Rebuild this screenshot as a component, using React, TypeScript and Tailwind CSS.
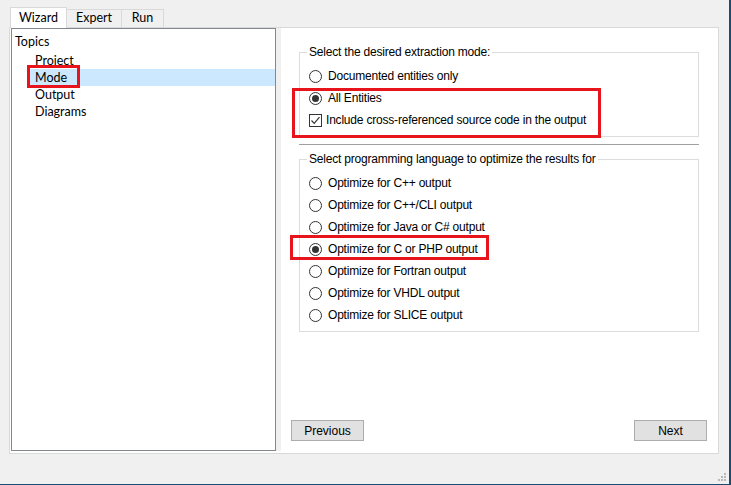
import React from 'react';

const uiFont = { fontFamily: 'Lato, "Noto Sans", sans-serif' };
const gothic = { fontFamily: '"Liberation Sans", Arial, sans-serif' };

const Radio: React.FC<{ label: string; checked?: boolean }> = ({ label, checked }) => (
  <div className="h-[22px] flex items-center pl-[9px]">
    <span className="w-[13px] h-[13px] rounded-full border border-[#333333] bg-white flex items-center justify-center shrink-0">
      {checked && <span className="w-[7px] h-[7px] rounded-full bg-[#333333]" />}
    </span>
    <span className="ml-[6px] text-[12px] tracking-[-0.2px] text-black whitespace-nowrap">{label}</span>
  </div>
);

const Check: React.FC<{ label: string }> = ({ label }) => (
  <div className="h-[22px] flex items-center pl-[9px]">
    <span className="w-[13px] h-[13px] border border-[#333333] bg-white flex items-center justify-center shrink-0">
      <svg width="11" height="11" viewBox="0 0 11 11">
        <path d="M1.5 5.5 L4.2 8.3 L9.5 2.2" fill="none" stroke="#333333" strokeWidth="1.2" />
      </svg>
    </span>
    <span className="ml-[4px] text-[12px] tracking-[-0.2px] text-black whitespace-nowrap">{label}</span>
  </div>
);

const GroupBox: React.FC<{ title: string; children: React.ReactNode }> = ({ title, children }) => (
  <fieldset className="border border-[#dcdcdc] pt-[6px] pb-[5px]">
    <legend className="ml-[7px] px-[2px] text-[12px] tracking-[-0.2px] leading-[14px] text-black">{title}</legend>
    {children}
  </fieldset>
);

export default function App() {
  const langs = [
    'Optimize for C++ output',
    'Optimize for C++/CLI output',
    'Optimize for Java or C# output',
    'Optimize for C or PHP output',
    'Optimize for Fortran output',
    'Optimize for VHDL output',
    'Optimize for SLICE output',
  ];

  return (
    <div className="w-[731px] h-[485px] bg-[#f0f0f0] border-r-2 border-b border-[#1b4d70] relative overflow-hidden">
      <div className="pl-[9px] pt-[7px]">
        {/* tabs */}
        <div className="flex items-end h-[20px] pl-px text-[12.5px] text-black" style={uiFont}>
          <div className="w-[57px] h-[21px] -mb-px bg-white border border-b-0 border-[#d9d9d9] flex items-center justify-center relative z-10">
            Wizard
          </div>
          <div className="w-[55px] h-[18px] border border-l-0 border-b-0 border-[#d9d9d9] flex items-center justify-center">
            Expert
          </div>
          <div className="w-[42px] h-[18px] border border-l-0 border-b-0 border-[#d9d9d9] flex items-center justify-center">
            Run
          </div>
        </div>

        {/* pane */}
        <div className="w-[710px] h-[427px] border border-[#d9d9d9] bg-white flex pl-px">
          {/* tree */}
          <div className="w-[265px] h-[423px] border border-[#828790] pt-[6px] text-[12.5px] text-black" style={uiFont}>
            <div className="h-[17px] leading-[14px] pl-[3px]">Topics</div>
            <div className="h-[17px] leading-[17px] ml-[16px] pl-[7px]">Project</div>
            <div className="h-[17px] leading-[17px] ml-[16px] pl-[7px] bg-[#cce8ff]">Mode</div>
            <div className="h-[17px] leading-[17px] ml-[16px] pl-[7px]">Output</div>
            <div className="h-[17px] leading-[17px] ml-[16px] pl-[7px]">Diagrams</div>
          </div>
          <div className="w-[5px] h-[423px] bg-[#f0f0f0]" />

          {/* right panel */}
          <div className="flex-1 h-[423px] flex flex-col" style={gothic}>
            <div className="pl-[18px] pr-[19px] pt-[17px]">
              <GroupBox title="Select the desired extraction mode:">
                <Radio label="Documented entities only" />
                <Radio label="All Entities" checked />
                <Check label="Include cross-referenced source code in the output" />
              </GroupBox>
              <div className="mt-[7px] h-px bg-[#a0a0a0]" />
              <div className="mt-[7px]">
                <GroupBox title="Select programming language to optimize the results for">
                  {langs.map((l) => (
                    <Radio key={l} label={l} checked={l === 'Optimize for C or PHP output'} />
                  ))}
                </GroupBox>
              </div>
            </div>
            <div className="flex-1" />
            <div className="flex justify-between pl-[10px] pr-[11px] pb-[10px]">
              <button className="w-[73px] h-[21px] bg-[#e1e1e1] border border-[#adadad] text-[12px] text-black">
                Previous
              </button>
              <button className="w-[73px] h-[21px] bg-[#e1e1e1] border border-[#adadad] text-[12px] text-black">
                Next
              </button>
            </div>
          </div>
        </div>
      </div>

      {/* highlight boxes */}
      <div className="absolute left-[27px] top-[65px] w-[53px] h-[23px] border-[3px] border-[#e8141c]" />
      <div className="absolute left-[292px] top-[88px] w-[309px] h-[50px] border-[3px] border-[#e8141c]" />
      <div className="absolute left-[290px] top-[235px] w-[199px] h-[25px] border-[3px] border-[#e8141c]" />

      {/* size grip */}
      <svg className="absolute right-[2px] bottom-[2px]" width="10" height="10" viewBox="0 0 10 10">
        <rect x="7" y="1" width="2" height="2" fill="#b8b8b8" />
        <rect x="4" y="4" width="2" height="2" fill="#b8b8b8" />
        <rect x="7" y="4" width="2" height="2" fill="#b8b8b8" />
        <rect x="1" y="7" width="2" height="2" fill="#b8b8b8" />
        <rect x="4" y="7" width="2" height="2" fill="#b8b8b8" />
        <rect x="7" y="7" width="2" height="2" fill="#b8b8b8" />
      </svg>
    </div>
  );
}
